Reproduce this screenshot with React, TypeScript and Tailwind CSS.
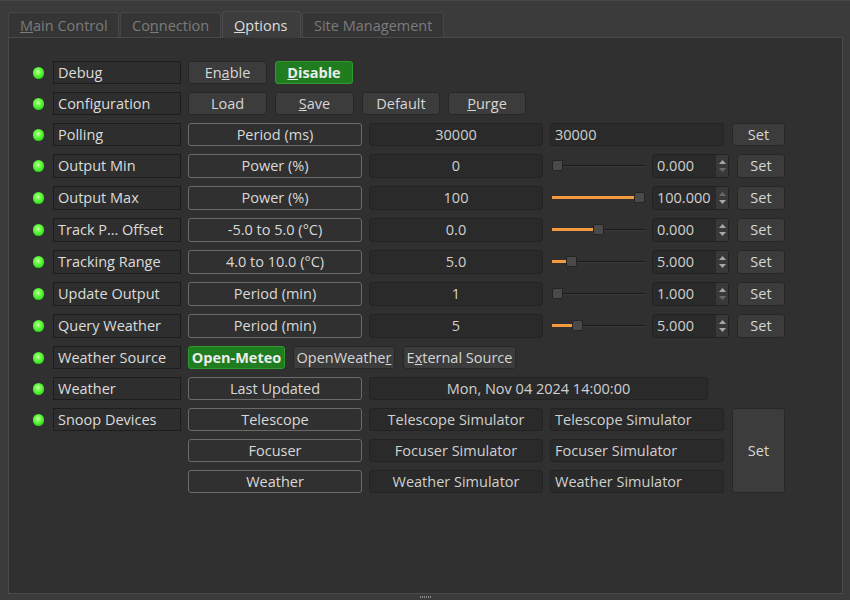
import React from "react";
import clsx from "clsx";

const tabs = [
  { pre: "", key: "M", post: "ain Control", w: "w-[111px]" },
  { pre: "Co", key: "n", post: "nection", w: "w-[101px]" },
  { pre: "", key: "O", post: "ptions", w: "w-[79px]", active: true },
  { pre: "Site Mana", key: "g", post: "ement", w: "w-[142px]" },
];

function Led() {
  return (
    <div className="w-[11px] flex items-center justify-center">
      <span className="block w-[12px] h-[12px] rounded-full bg-[radial-gradient(circle_at_45%_40%,#d4ffb8_0%,#6dff45_30%,#3de025_65%,#22a818_100%)]" />
    </div>
  );
}

function Label({ text }: { text: string }) {
  return (
    <div className="ml-[9px] w-[128px] border border-[#1d1d1d] bg-[#2e2e2e] pl-[4px] flex items-center text-[#dcdcdc] whitespace-nowrap">
      {text}
    </div>
  );
}

function Btn({
  children,
  w,
  green,
  className,
}: {
  children: React.ReactNode;
  w: string;
  green?: boolean;
  className?: string;
}) {
  return (
    <div
      className={clsx(
        "rounded-[3px] border flex items-center justify-center whitespace-nowrap",
        w,
        green
          ? "bg-[#1f7c1f] border-[#2f9a2f] text-[#ececec] font-bold"
          : "bg-[#3c3c3c] border-[#272727] text-[#d6d6d6]",
        className
      )}
    >
      {children}
    </div>
  );
}

function Caption({ text, w = "w-[174px]" }: { text: string; w?: string }) {
  return (
    <div
      className={clsx(
        "rounded-[3px] border border-[#6a6a6a] flex items-center justify-center text-[#d8d8d8] whitespace-nowrap",
        w
      )}
    >
      {text}
    </div>
  );
}

function Display({ text, w = "w-[174px]", left }: { text: string; w?: string; left?: boolean }) {
  return (
    <div
      className={clsx(
        "rounded-[3px] border border-[#232323] bg-[#2a2a2a] flex items-center text-[#d0d0d0] whitespace-nowrap overflow-hidden",
        left ? "pl-[4px]" : "justify-center",
        w
      )}
    >
      {text}
    </div>
  );
}

function Slider({ pos }: { pos: number }) {
  const left = Math.round(pos * 82);
  return (
    <div className="relative w-[93px] ml-[2px] mr-[7px] h-full">
      <div className="absolute left-0 right-0 top-[11px] h-[2px] bg-[#1b1b1b] border-b border-[#3a3a3a]" />
      {left > 0 && (
        <div
          className="absolute left-0 top-[10px] h-[3px] bg-[#f49a3f]"
          style={{ width: left + 2 }}
        />
      )}
      <div
        className="absolute top-[6px] w-[11px] h-[11px] rounded-[2px] bg-[#4a4a4a] border border-[#242424]"
        style={{ left }}
      />
    </div>
  );
}

function Spin({ value, atMin, atMax }: { value: string; atMin?: boolean; atMax?: boolean }) {
  return (
    <div className="w-[77px] rounded-[3px] border border-[#222] bg-[#2a2a2a] flex items-stretch text-[#d0d0d0]">
      <div className="flex-1 flex items-center pl-[4px] whitespace-nowrap overflow-hidden">{value}</div>
      <div className="w-[12px] bg-[#393939] rounded-r-[2px] flex flex-col items-center justify-center gap-[4px]">
        <svg width="7" height="4" viewBox="0 0 7 4">
          <path d="M0 4 L3.5 0 L7 4 Z" fill={atMax ? "#6a6a6a" : "#a8a8a8"} />
        </svg>
        <svg width="7" height="4" viewBox="0 0 7 4">
          <path d="M0 0 L3.5 4 L7 0 Z" fill={atMin ? "#6a6a6a" : "#a8a8a8"} />
        </svg>
      </div>
    </div>
  );
}

const sliderRows = [
  { label: "Output Min", cap: "Power (%)", val: "0", pos: 0, spin: "0.000", atMin: true },
  { label: "Output Max", cap: "Power (%)", val: "100", pos: 1, spin: "100.000", atMax: true },
  { label: "Track P… Offset", cap: "-5.0 to 5.0 (°C)", val: "0.0", pos: 0.5, spin: "0.000" },
  { label: "Tracking Range", cap: "4.0 to 10.0 (°C)", val: "5.0", pos: 1 / 6, spin: "5.000" },
  { label: "Update Output", cap: "Period (min)", val: "1", pos: 0, spin: "1.000", atMin: true },
  { label: "Query Weather", cap: "Period (min)", val: "5", pos: 0.24, spin: "5.000" },
];

const snoop = [
  { cap: "Telescope", val: "Telescope Simulator" },
  { cap: "Focuser", val: "Focuser Simulator" },
  { cap: "Weather", val: "Weather Simulator" },
];

export default function App() {
  return (
    <div className="w-[850px] h-[600px] bg-[#3b3b3b] flex flex-col font-['Open_Sans',sans-serif] text-[14.5px] border-t border-[#474747]">
      <div className="h-[26px] mt-[10px] pl-[8px] flex items-end">
        {tabs.map((t) => (
          <div
            key={t.key + t.post}
            className={clsx(
              "flex items-center pl-[11px] pt-[2px] border border-b-0 rounded-t-[3px] mr-[1px] whitespace-nowrap",
              t.w,
              t.active
                ? "h-[27px] -mb-px bg-[#3d3d3d] border-[#4c4c4c] text-[#dedede] z-10"
                : "h-[25px] bg-[#353535] border-[#464646] text-[#7b7b7b]"
            )}
          >
            {t.pre}
            <u>{t.key}</u>
            {t.post}
          </div>
        ))}
      </div>
      <div className="flex-1 ml-[8px] mr-[7px] border border-[#4a4a4a] bg-[#303030] pt-[23px] pl-[24px] flex flex-col gap-[8px]">
        <div className="flex h-[23px]">
          <Led />
          <Label text="Debug" />
          <div className="ml-[7px] flex gap-[8px]">
            <Btn w="w-[79px]">
              En<u>a</u>ble
            </Btn>
            <Btn w="w-[78px]" green>
              <u>D</u>isable
            </Btn>
          </div>
        </div>
        <div className="flex h-[23px]">
          <Led />
          <Label text="Configuration" />
          <div className="ml-[7px] flex gap-[8px]">
            <Btn w="w-[79px]">Load</Btn>
            <Btn w="w-[79px]">
              <u>S</u>ave
            </Btn>
            <Btn w="w-[78px]">Default</Btn>
            <Btn w="w-[78px]">
              <u>P</u>urge
            </Btn>
          </div>
        </div>
        <div className="flex h-[23px]">
          <Led />
          <Label text="Polling" />
          <div className="ml-[7px] flex gap-[7px]">
            <Caption text="Period (ms)" />
            <Display text="30000" />
            <Display text="30000" left />
            <Btn w="w-[53px]" className="ml-px">
              Set
            </Btn>
          </div>
        </div>
        {sliderRows.map((r) => (
          <div key={r.label} className="flex h-[24px]">
            <Led />
            <Label text={r.label} />
            <div className="ml-[7px] flex gap-[7px]">
              <Caption text={r.cap} />
              <Display text={r.val} />
              <div className="flex">
                <Slider pos={r.pos} />
                <Spin value={r.spin} atMin={r.atMin} atMax={r.atMax} />
                <Btn w="w-[48px]" className="ml-[8px]">
                  Set
                </Btn>
              </div>
            </div>
          </div>
        ))}
        <div className="flex h-[23px]">
          <Led />
          <Label text="Weather Source" />
          <div className="ml-[7px] flex gap-[8px]">
            <Btn w="w-[97px]" green>
              Open-Meteo
            </Btn>
            <Btn w="w-[102px]">
              OpenWeathe<u>r</u>
            </Btn>
            <Btn w="w-[113px]">
              E<u>x</u>ternal Source
            </Btn>
          </div>
        </div>
        <div className="flex h-[23px]">
          <Led />
          <Label text="Weather" />
          <div className="ml-[7px] flex gap-[7px]">
            <Caption text="Last Updated" />
            <Display text="Mon, Nov 04 2024 14:00:00" w="w-[339px]" />
          </div>
        </div>
        <div className="flex">
          <div className="flex h-[23px]">
            <Led />
            <Label text="Snoop Devices" />
          </div>
          <div className="ml-[7px] flex gap-[8px]">
            <div className="flex flex-col gap-[8px]">
              {snoop.map((s) => (
                <div key={s.cap} className="flex h-[23px] gap-[7px]">
                  <Caption text={s.cap} />
                  <Display text={s.val} />
                  <Display text={s.val} left />
                </div>
              ))}
            </div>
            <Btn w="w-[53px]" className="h-[85px]">
              Set
            </Btn>
          </div>
        </div>
      </div>
      <div className="h-[6px] flex items-center justify-center gap-[1px]">
        {[0, 1, 2, 3, 4, 5].map((i) => (
          <span key={i} className="block w-[1px] h-[2px] bg-[#8a8a8a]" />
        ))}
      </div>
    </div>
  );
}
